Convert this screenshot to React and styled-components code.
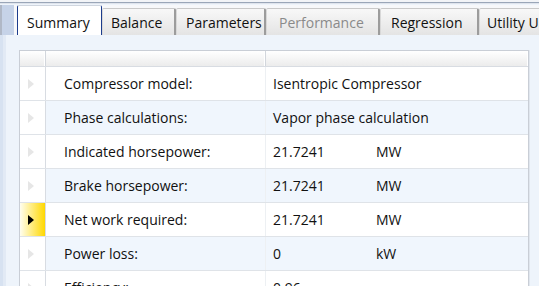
import React from 'react';
import styled, {createGlobalStyle} from 'styled-components';

const Global = createGlobalStyle`
  html, body { margin: 0; padding: 0; background: #eef4fb; }
  body { font-family: "Open Sans", "Noto Sans", sans-serif; }
`;

const tabs = [
  {label: 'Summary', width: 85, pad: 9, active: true},
  {label: 'Balance', width: 74, pad: 8},
  {label: 'Parameters', width: 90, pad: 9},
  {label: 'Performance', width: 114, pad: 12, disabled: true},
  {label: 'Regression', width: 99, pad: 10},
  {label: 'Utility Usage', width: 100, pad: 7},
];

const rows = [
  {name: 'Compressor model:', value: 'Isentropic Compressor'},
  {name: 'Phase calculations:', value: 'Vapor phase calculation'},
  {name: 'Indicated horsepower:', value: '21.7241', unit: 'MW'},
  {name: 'Brake horsepower:', value: '21.7241', unit: 'MW'},
  {name: 'Net work required:', value: '21.7241', unit: 'MW', current: true},
  {name: 'Power loss:', value: '0', unit: 'kW'},
  {name: 'Efficiency:', value: '0.96'},
];

export default function App() {
  return (
    <Window>
      <Global/>
      <TopRule/>
      <TabBar>
        <TabLead/>
        {tabs.map(t => (
          <Tab key={t.label} $w={t.width} $pad={t.pad} $active={t.active} $disabled={t.disabled}>
            {t.label}
          </Tab>
        ))}
      </TabBar>
      <Content>
        <Grid>
          <HeaderRow>
            <HeadCell $w={26}/>
            <HeadCell $w={220}/>
            <HeadCell $grow/>
          </HeaderRow>
          {rows.map((r, i) => (
            <Row key={r.name} $alt={i % 2 === 1}>
              <Selector $current={r.current}>
                <Arrow $current={r.current}/>
              </Selector>
              <NameCell>{r.name}</NameCell>
              <ValueCell>
                <Value>{r.value}</Value>
                {r.unit && <span>{r.unit}</span>}
              </ValueCell>
            </Row>
          ))}
        </Grid>
      </Content>
    </Window>
  );
}

const Window = styled.div`
  width: 539px;
  height: 286px;
  overflow: hidden;
  display: flex;
  flex-direction: column;
  background: #eef4fb;
`;

const TopRule = styled.div`
  height: 2px;
  background: #f2f4f7;
  border-bottom: 1px solid #9aa6b8;
  box-shadow: 0 1px 0 #dfe4ec;
  margin-bottom: 2px;
  flex-shrink: 0;
`;

const TabBar = styled.div`
  display: flex;
  align-items: flex-end;
  height: 30px;
  background: #f7f8fa;
  flex-shrink: 0;
  overflow: hidden;
`;

const TabLead = styled.div`
  flex-shrink: 0;
  width: 14px;
  height: 30px;
  margin-right: 3px;
  background: #c6d3e8;
  border-left: 2px solid #b0b8c6;
  box-sizing: border-box;
`;

const Tab = styled.div`
  box-sizing: border-box;
  flex-shrink: 0;
  width: ${p => p.$w}px;
  height: ${p => (p.$active ? 30 : 27)}px;
  padding-left: ${p => p.$pad}px;
  padding-top: ${p => (p.$active ? 3 : 1)}px;
  display: flex;
  align-items: center;
  font-size: 14px;
  white-space: nowrap;
  overflow: hidden;
  color: ${p => (p.$disabled ? '#8a8a8a' : '#111')};
  background: ${p => (p.$active ? '#ffffff' : 'linear-gradient(#f8f8f8, #e4e4e4)')};
  border-top: 1px solid ${p => (p.$active ? '#d0d6df' : '#c9c9c9')};
  border-left: 1px solid ${p => (p.$active ? '#1c3c8c' : '#d8d8d8')};
  border-right: ${p => (p.$active ? '1px solid #1c3c8c' : '2px solid #9c9c9c')};
  border-radius: 2px 2px 0 0;
`;

const Content = styled.div`
  flex: 1;
  background: #eef4fb;
  border-left: 3px solid #d7e2f1;
  padding: 15px 10px 0 16px;
  box-shadow: inset 3px 0 0 #e2eaf5;
`;

const Grid = styled.div`
  background: #ffffff;
  border: 1px solid #c9ced6;
  border-bottom: none;
  box-shadow: 1px 0 0 #e0e6ee;
`;

const HeaderRow = styled.div`
  display: flex;
  height: 15px;
  border-bottom: 1px solid #d8dce2;
`;

const HeadCell = styled.div`
  box-sizing: border-box;
  ${p => (p.$grow ? 'flex: 1;' : `width: ${p.$w}px;`)}
  background: linear-gradient(#ffffff, #ececec);
  border-right: 1px solid #d2d6dc;
  box-shadow: inset -1px 0 0 #ffffff;
  &:last-child { border-right: none; }
`;

const Row = styled.div`
  display: flex;
  height: 33px;
  border-bottom: 1px solid #dfe3e8;
  font-size: 14px;
  color: #111;
  background: ${p => (p.$alt ? '#f0f6fd' : '#ffffff')};
`;

const Selector = styled.div`
  box-sizing: border-box;
  width: 26px;
  display: flex;
  align-items: center;
  padding-left: 8px;
  border-right: 1px solid #d8dce2;
  background: ${p => (p.$current ? 'linear-gradient(90deg, #fffef0, #ffd800)' : '#ffffff')};
`;

const Arrow = styled.span`
  width: 0;
  height: 0;
  border-top: 5px solid transparent;
  border-bottom: 5px solid transparent;
  border-left: 6px solid ${p => (p.$current ? '#000' : '#e6e6e6')};
`;

const NameCell = styled.div`
  box-sizing: border-box;
  width: 220px;
  padding-left: 18px;
  display: flex;
  align-items: center;
  border-right: 1px solid #edf0f3;
  white-space: nowrap;
`;

const ValueCell = styled.div`
  flex: 1;
  padding-left: 7px;
  display: flex;
  align-items: center;
  white-space: nowrap;
`;

const Value = styled.span`
  display: inline-block;
  width: 103px;
`;
